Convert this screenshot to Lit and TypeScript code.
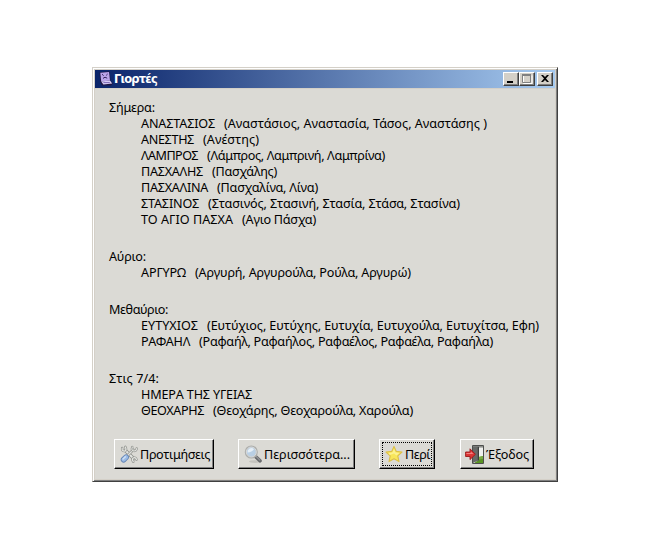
import { LitElement, html, svg, css, nothing } from "lit";
import { customElement, property } from "lit/decorators.js";

type Entry = { name: string; w: number; alt?: string; aw?: number };
type Group = { day: string; w: number; entries: Entry[] };

const GROUPS: Group[] = [
  { day: "Σήμερα:", w: 46, entries: [
    { name: "ΑΝΑΣΤΑΣΙΟΣ", w: 74, alt: "(Αναστάσιος, Αναστασία, Τάσος, Αναστάσης )", aw: 263 },
    { name: "ΑΝΕΣΤΗΣ", w: 53, alt: "(Ανέστης)", aw: 56 },
    { name: "ΛΑΜΠΡΟΣ", w: 57, alt: "(Λάμπρος, Λαμπρινή, Λαμπρίνα)", aw: 178 },
    { name: "ΠΑΣΧΑΛΗΣ", w: 62, alt: "(Πασχάλης)", aw: 65 },
    { name: "ΠΑΣΧΑΛΙΝΑ", w: 67, alt: "(Πασχαλίνα, Λίνα)", aw: 101 },
    { name: "ΣΤΑΣΙΝΟΣ", w: 58, alt: "(Στασινός, Στασινή, Στασία, Στάσα, Στασίνα)", aw: 252 },
    { name: "ΤΟ ΑΓΙΟ ΠΑΣΧΑ", w: 92, alt: "(Αγιο Πάσχα)", aw: 74 },
  ] },
  { day: "Αύριο:", w: 37, entries: [
    { name: "ΑΡΓΥΡΩ", w: 45, alt: "(Αργυρή, Αργυρούλα, Ρούλα, Αργυρώ)", aw: 216 },
  ] },
  { day: "Μεθαύριο:", w: 59, entries: [
    { name: "ΕΥΤΥΧΙΟΣ", w: 57, alt: "(Ευτύχιος, Ευτύχης, Ευτυχία, Ευτυχούλα, Ευτυχίτσα, Εφη)", aw: 332 },
    { name: "ΡΑΦΑΗΛ", w: 49, alt: "(Ραφαήλ, Ραφαήλος, Ραφαέλος, Ραφαέλα, Ραφαήλα)", aw: 294 },
  ] },
  { day: "Στις 7/4:", w: 50, entries: [
    { name: "ΗΜΕΡΑ ΤΗΣ ΥΓΕΙΑΣ", w: 111 },
    { name: "ΘΕΟΧΑΡΗΣ", w: 63, alt: "(Θεοχάρης, Θεοχαρούλα, Χαρούλα)", aw: 200 },
  ] },
];

/** One run of text, tracked so that it fills the given width. */
@customElement("fit-text")
class FitText extends LitElement {
  static styles = css`
    :host { display: inline-block; white-space: pre; }
    .run { display: inline-block; }
  `;
  @property() text = "";
  @property({ type: Number }) width = 0;
  firstUpdated() {
    const run = this.renderRoot.querySelector(".run") as HTMLElement;
    const natural = run.getBoundingClientRect().width;
    run.style.letterSpacing = `${(this.width - natural) / this.text.length}px`;
    this.style.width = `${this.width}px`;
  }
  render() {
    return html`<span class="run">${this.text}</span>`;
  }
}

const tools = svg`
  <g fill="none" stroke-linecap="round">
    <path d="M5.5 5.5 14.5 14.5" stroke="#8b8d89" stroke-width="3.6"/>
    <path d="M5.5 5.5 14.5 14.5" stroke="#e4e5e2" stroke-width="2"/>
    <path d="M2.3 3.2Q1.6 6.8 5.4 6.4Q7.2 5 5.6 2" stroke="#92948f" stroke-width="2.6"/>
    <path d="M2.3 3.2Q1.6 6.8 5.4 6.4Q7.2 5 5.6 2" stroke="#e4e5e2" stroke-width="1.2"/>
    <path d="M17.4 15.4Q16.6 12.6 13.8 13.6Q12.2 15.4 14 17.6" stroke="#92948f" stroke-width="2.6"/>
    <path d="M17.4 15.4Q16.6 12.6 13.8 13.6Q12.2 15.4 14 17.6" stroke="#e4e5e2" stroke-width="1.2"/>
    <path d="M8.5 10.5 14 5" stroke="#92948f" stroke-width="2.8"/>
    <path d="M8.5 10.5 14 5" stroke="#dfe0dd" stroke-width="1.3"/>
    <path d="M13 2.2Q11.5 5.6 14.2 6.2Q17.2 6.6 17.6 3.6" stroke="#92948f" stroke-width="2.5"/>
    <path d="M13 2.2Q11.5 5.6 14.2 6.2Q17.2 6.6 17.6 3.6" stroke="#e4e5e2" stroke-width="1.1"/>
    <path d="M3.8 15.4 6.4 12.8" stroke="#6485b4" stroke-width="6"/>
    <path d="M3.8 15.4 6.4 12.8" stroke="#9bbbe6" stroke-width="4.4"/>
    <path d="M3.2 14.8 5.6 12.4" stroke="#cfe0f5" stroke-width="1.5"/>
  </g>`;

const lens = svg`
  <ellipse cx="11" cy="16.6" rx="6" ry="1.4" fill="#c4c3be"/>
  <path d="M11 11 16 15.8" stroke="#66686b" stroke-width="3.6" stroke-linecap="round"/>
  <path d="M11.6 11 15.8 15" stroke="#909296" stroke-width="1.2" stroke-linecap="round"/>
  <circle cx="7.3" cy="7" r="5.6" fill="#b9cfe4" stroke="#acaeac" stroke-width="1.9"/>
  <circle cx="7.3" cy="7" r="5" fill="none" stroke="#e4e5e4" stroke-width=".8"/>
  <path d="M3.6 7.6A3.8 3.8 0 0 1 10 4.2Q8 7.2 3.6 7.6Z" fill="#e6eff7"/>`;

const star = svg`
  <path d="M9 1.4 11.3 6.4 17 7 12.8 10.8 14 16.6 9 13.7 4 16.6 5.2 10.8 1 7 6.7 6.4Z" fill="#f8e65a" stroke="#dcbf48" stroke-width="1.1" stroke-linejoin="round"/>
  <path d="M9 3.8 10.6 7.4 14.4 7.9 11.5 10.4 9 8.6 4.8 10 3.6 7.9 7.4 7.4Z" fill="#fcf291"/>`;

const door = svg`
  <path d="M7.5.5H18.5V18.5H7.5Z" fill="#f0f1ee" stroke="#4f504e"/>
  <path d="M8 1H18V2.6H8Z" fill="#8c8e8a"/>
  <path d="M13 12.5Q15 10.5 18 11V18H9.5L13 15.6Z" fill="#79ab43"/>
  <path d="M13 15.6Q15 13.5 18 14V18H9.5Z" fill="#5a9424"/>
  <path d="M8 1.6H14V15.2L8 18Z" fill="#686a68"/>
  <path d="M12.8 2H14V15L12.8 15.8Z" fill="#3c3e3c"/>
  <path d="M.6 7H5V3.8L10.4 9.3 5 14.6V11.5H.6Z" fill="#dc3535" stroke="#981a1a" stroke-width=".9" stroke-linejoin="round"/>
  <path d="M1.4 8H5.8V6.4L8.4 9H1.4Z" fill="#f38080"/>`;

@customElement("app-root")
class AppRoot extends LitElement {
  static styles = css`
    * { box-sizing: border-box; }
    :host {
      display: block; width: 650px; height: 550px; padding: 67px 92px 68px;
      box-sizing: border-box; background: #fff; color: #000;
      font: 12.6px/16px "Noto Sans", "DejaVu Sans", sans-serif;
    }
    .window {
      width: 466px; height: 415px; padding: 1px; background: #d4d0c8;
      border: 1px solid; border-color: #d4d0c8 #404040 #404040 #d4d0c8;
      box-shadow: inset 1px 1px #fff, inset -1px -1px #808080;
      display: flex; flex-direction: column;
    }
    .title {
      flex: none; height: 18px; margin: 1px 1px 0; padding: 0 2px 0 3px;
      display: flex; align-items: center;
      background: linear-gradient(90deg, #0a246a, #a6caf0);
    }
    .logo { width: 14px; height: 15px; margin: 0 1px 1px 1px; }
    .name {
      flex: 1; color: #fff; font: bold 11.5px/18px "DejaVu Sans", sans-serif;
    }
    .ctl {
      width: 16px; height: 14px; background: #d4d0c8;
      border: 1px solid; border-color: #fff #404040 #404040 #fff;
      box-shadow: inset -1px -1px #808080;
    }
    .ctl svg { display: block; width: 14px; height: 12px; }
    .close { margin-left: 2px; }
    .body {
      flex: 1; margin: 1px 1px 1px; background: #dbdad5;
      display: flex; flex-direction: column; justify-content: space-between;
    }
    .list { padding: 11px 0 0 14px; display: flex; flex-direction: column; gap: 21px; }
    .row { height: 16px; display: flex; }
    .entry { padding-left: 32px; gap: 9px; }
    .buttons { display: flex; padding: 0 0 10px 19px; }
    .btn {
      height: 30px; display: flex; align-items: center; padding: 1px 0 0 5px;
      border: 1px solid; border-color: #fff #000 #000 #fff;
      box-shadow: inset -1px -1px #808080; position: relative;
    }
    .btn svg { flex: none; width: 20px; height: 20px; }
    .prefs { width: 100px; margin-right: 24px; }
    .prefs svg { width: 19px; height: 19px; margin-right: 1px; }
    .more { width: 117px; margin-right: 24px; }
    .about { width: 56px; margin-right: 25px; }
    .exit { width: 74px; padding-left: 4px; }
    .exit svg { margin-right: 1px; }
    .focus::after { content: ""; position: absolute; inset: 2px; border: 1px dotted #000; }
  `;

  private button(cls: string, icon: unknown, text: string, width: number) {
    return html`<div class="btn ${cls}">
      <svg viewBox="0 0 20 20">${icon}</svg><fit-text .text=${text} .width=${width}></fit-text>
    </div>`;
  }

  render() {
    return html`<div class="window">
      <div class="title">
        <svg class="logo" viewBox="0 0 14 15">
          <path d="M.5 1.5 10.5.3 11.6 10 13.8 12.5 12 14.6 3 14.4 1.2 11Z" fill="#211642"/>
          <path d="M1.3 1.8 10 1 11 9.6 2.2 10.4Z" fill="#b9a3e8"/>
          <path d="M2.2 10.4 11 9.6 13.2 12.6 4.4 13.6Z" fill="#d9cdf6"/>
          <path d="M3 3.2 4.6 4.6M7.2 4.4 8.6 3M4 7.4 6 6.2 8.2 7.2" stroke="#33215c" fill="none"/>
          <path d="M4.4 11.6H10.8" stroke="#7e67b4"/>
        </svg>
        <span class="name"><fit-text .text=${"Γιορτές"} .width=${43}></fit-text></span>
        <div class="ctl"><svg viewBox="0 0 14 12"><path d="M3 8H9V10H3Z"/></svg></div>
        <div class="ctl"><svg viewBox="0 0 14 12">
          <path d="M3.5 2V10.5H12V2.5" fill="none" stroke="#fff"/>
          <path d="M2.5 1.5H10.5V9.5H2.5Z" fill="none" stroke="#808080"/><path d="M2 1H11V3H2Z" fill="#808080"/>
        </svg></div>
        <div class="ctl close"><svg viewBox="0 0 14 12">
          <path d="M3 2H5L7 4 9 2H11L8 5.5 11 9H9L7 7 5 9H3L6 5.5Z"/>
        </svg></div>
      </div>
      <div class="body">
        <div class="list">
          ${GROUPS.map((g) => html`<div>
            <div class="row"><fit-text .text=${g.day} .width=${g.w}></fit-text></div>
            ${g.entries.map((e) => html`<div class="row entry">
              <fit-text .text=${e.name} .width=${e.w}></fit-text>
              ${e.alt ? html`<fit-text .text=${e.alt} .width=${e.aw}></fit-text>` : nothing}
            </div>`)}
          </div>`)}
        </div>
        <div class="buttons">
          ${this.button("prefs", tools, "Προτιμήσεις", 70)}
          ${this.button("more", lens, "Περισσότερα...", 86)}
          ${this.button("about focus", star, "Περί", 25)}
          ${this.button("exit", door, "Έξοδος", 43)}
        </div>
      </div>
    </div>`;
  }
}
